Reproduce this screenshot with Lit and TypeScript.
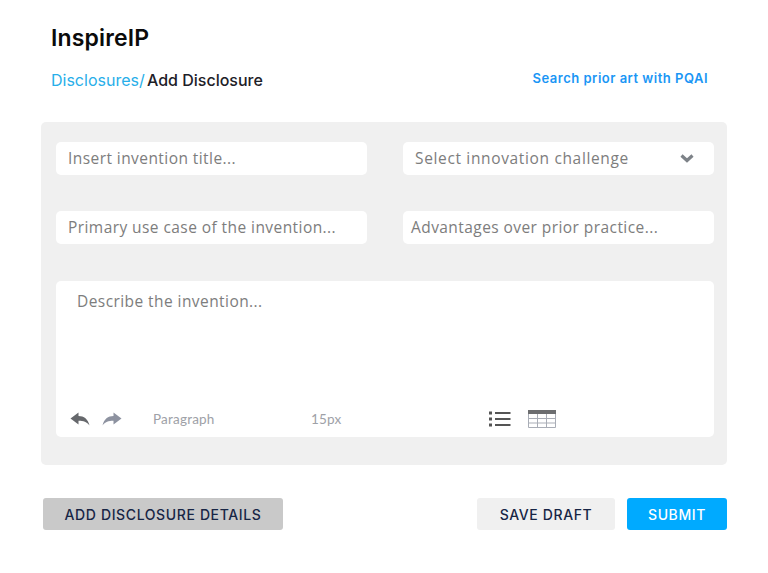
import { LitElement, html, css } from "lit";
import { customElement } from "lit/decorators.js";

@customElement("app-root")
export class AppRoot extends LitElement {
  static styles = css`
    :host { display: block; width: 768px; height: 573px; background: #fff; overflow: hidden; font-family: "Inter", "Liberation Sans", sans-serif; }
    .page { display: flex; flex-direction: column; padding: 24px 41px 0; }
    h1 { margin: 0 0 0 10px; font-size: 23px; line-height: 28px; font-weight: 600; color: #0b0b0b; letter-spacing: 0.15px; }
    .crumbs { display: flex; justify-content: space-between; align-items: center; margin: 14px 19px 0 10px; height: 28px; }
    .path { font-size: 16px; color: #1d2027; font-weight: 500; }
    .path span { color: #27aee9; font-weight: 400; margin-right: -2px; }
    .prior { font-size: 13px; font-weight: 600; color: #1a96f5; letter-spacing: 0.5px; position: relative; top: -2px; }
    .panel { margin-top: 28px; height: 343px; box-sizing: border-box; background: #f0f0f0; border-radius: 5px; padding: 20px 13px 0 15px; display: flex; flex-direction: column; }
    .grid { display: grid; grid-template-columns: 311px 311px; column-gap: 36px; row-gap: 36px; }
    .field { height: 33px; background: #fff; border-radius: 5px; display: flex; align-items: center; justify-content: space-between; box-sizing: border-box; padding: 0 20px 2px 12px; font-size: 15.5px; letter-spacing: 0.43px; color: #7d7d7d; white-space: nowrap; font-family: "Open Sans", sans-serif; font-weight: 500; }
    .field.adv { padding-left: 8px; }
    .field.select { letter-spacing: 0.65px; }
    .field svg { position: relative; top: 1px; }
    .editor { margin-top: 37px; height: 156px; background: #fff; border-radius: 5px; box-sizing: border-box; padding: 9px 14px 0 21px; display: flex; flex-direction: column; justify-content: space-between; font-family: "Open Sans", sans-serif; font-size: 15.5px; letter-spacing: 0.43px; font-weight: 500; color: #7d7d7d; }
    .toolbar { display: flex; align-items: center; height: 26px; margin: 0 0 5px -7px; font-family: "Lato", sans-serif; font-size: 13.5px; font-weight: 400; color: #9ea1a7; letter-spacing: 0.2px; }
    .toolbar svg { display: block; flex: none; }
    .undo { margin-right: 12px; }
    .para { margin-left: 31px; width: 158px; }
    .size { width: 178px; }
    .list { margin-right: 17px; }
    .actions { display: flex; align-items: center; margin: 33px 0 0 2px; }
    button { height: 32px; border: none; border-radius: 3px; font-family: "Inter", sans-serif; font-size: 14px; font-weight: 500; letter-spacing: 0.62px; color: #172545; padding: 0; }
    .details { width: 240px; background: #c9c9c9; }
    .draft { width: 138px; margin-left: auto; background: #f0f0f0; }
    .submit { width: 100px; margin-left: 12px; background: #00aaff; color: #fff; }
  `;

  render() {
    return html`<div class="page">
      <h1>InspireIP</h1>
      <div class="crumbs">
        <div class="path"><span>Disclosures/</span> Add Disclosure</div>
        <div class="prior">Search prior art with PQAI</div>
      </div>
      <div class="panel">
        <div class="grid">
          <div class="field">Insert invention title...</div>
          <div class="field select">Select innovation challenge
            <svg width="14" height="9" viewBox="0 0 14 9"><path d="M1.5 1.5L7 6.5L12.5 1.5" fill="none" stroke="#7d8288" stroke-width="3.2"/></svg>
          </div>
          <div class="field">Primary use case of the invention...</div>
          <div class="field adv">Advantages over prior practice...</div>
        </div>
        <div class="editor">
          <div>Describe the invention...</div>
          <div class="toolbar">
            <svg class="undo" width="20" height="14" viewBox="0 0 20 14"><path d="M0.5 6.5L8.5 0.5V4C14 4 18 7 19.5 13.5C17 10 13.5 8.8 8.5 8.8V12.5Z" fill="#66686c"/></svg>
            <svg width="20" height="14" viewBox="0 0 20 14"><path d="M19.5 6.5L11.5 0.5V4C6 4 2 7 0.5 13.5C3 10 6.5 8.8 11.5 8.8V12.5Z" fill="#8d92a0"/></svg>
            <div class="para">Paragraph</div>
            <div class="size">15px</div>
            <svg class="list" width="22" height="18" viewBox="0 0 22 18"><g fill="#555"><rect x="0" y="1.5" width="3" height="3"/><rect x="0" y="7.5" width="3" height="3"/><rect x="0" y="13.5" width="3" height="3"/><rect x="6" y="2" width="15.5" height="2"/><rect x="6" y="8" width="15.5" height="2"/><rect x="6" y="14" width="15.5" height="2"/></g></svg>
            <svg width="28" height="18" viewBox="0 0 28 18"><rect x="0" y="0" width="28" height="4" fill="#6d6e70"/><path d="M.5 4v13.5h27V4M.5 8.5h27M.5 13h27M9.5 4v13.5M18.5 4v13.5" fill="none" stroke="#a9adb6"/></svg>
          </div>
        </div>
      </div>
      <div class="actions">
        <button class="details">ADD DISCLOSURE DETAILS</button>
        <button class="draft">SAVE DRAFT</button>
        <button class="submit">SUBMIT</button>
      </div>
    </div>`;
  }
}
